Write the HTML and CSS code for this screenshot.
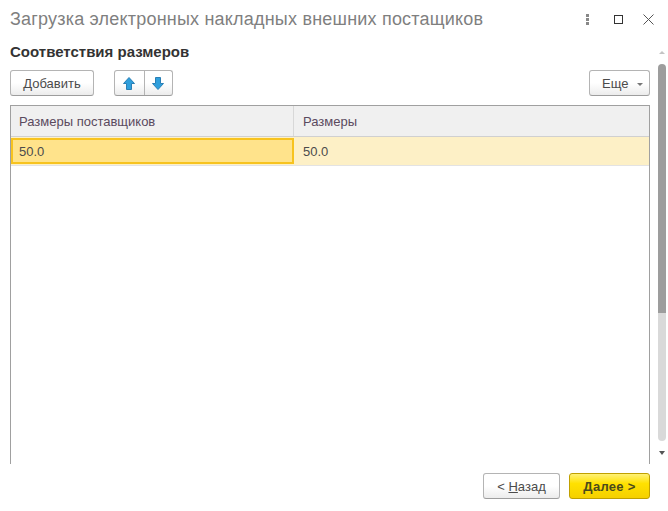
FILE: index.html
```html
<!DOCTYPE html>
<html lang="ru">
<head>
  <meta charset="UTF-8">
  <title>Загрузка электронных накладных внешних постащиков</title>
  <link rel="stylesheet" href="styles.css">
</head>
<body>
<div class="window">
  <div class="titlebar">
    <div class="title">Загрузка электронных накладных внешних постащиков</div>
    <div class="win-btns">
      <svg class="win-menu" width="3" height="11" viewBox="0 0 3 11"><rect width="3" height="3" fill="#888"/><rect y="4" width="3" height="3" fill="#888"/><rect y="8" width="3" height="3" fill="#888"/></svg>
      <svg width="9" height="9" viewBox="0 0 9 9"><rect x="0.5" y="0.5" width="8" height="8" fill="none" stroke="#333"/></svg>
      <svg width="11" height="11" viewBox="0 0 11 11"><path d="M0.5 0.5L10.5 10.5M10.5 0.5L0.5 10.5" stroke="#555" fill="none"/></svg>
    </div>
  </div>

  <div class="main">
    <div class="content">
      <h1 class="form-title">Соответствия размеров</h1>
      <div class="toolbar">
        <button class="btn btn-add">Добавить</button>
        <div class="btn-group">
          <button class="btn-icon">
            <svg width="12" height="13" viewBox="0 0 12 13"><path d="M6 .5L11.5 6.5H8.5V12.5H3.5V6.5H.5Z" fill="#2f9fdc" stroke="#2a7fb5"/></svg>
          </button>
          <button class="btn-icon">
            <svg width="12" height="13" viewBox="0 0 12 13"><path d="M6 12.5L11.5 6.5H8.5V.5H3.5V6.5H.5Z" fill="#2f9fdc" stroke="#2a7fb5"/></svg>
          </button>
        </div>
        <button class="btn btn-more">Еще <span class="caret"></span></button>
      </div>
      <div class="grid">
        <div class="grid-head">
          <div class="cell col-1">Размеры поставщиков</div>
          <div class="cell col-2">Размеры</div>
        </div>
        <div class="grid-row">
          <div class="cell col-1 current">50.0</div>
          <div class="cell col-2">50.0</div>
        </div>
      </div>
    </div>
    <div class="scrollbar">
      <span class="arrow up"></span>
      <div class="thumb"></div>
      <span class="arrow down"></span>
    </div>
  </div>

  <div class="footer">
    <button class="btn btn-back">&lt; <u>Н</u>азад</button>
    <button class="btn btn-next"><u>Д</u>алее &gt;</button>
  </div>
</div>
</body>
</html>
```

FILE: styles.css
```css
* {
  box-sizing: border-box;
}

body {
  margin: 0;
  background: #fff;
  font-family: "Liberation Sans", Arial, sans-serif;
  font-size: 13px;
  color: #4b4b4b;
}

.window {
  width: 668px;
  height: 511px;
  display: flex;
  flex-direction: column;
  overflow: hidden;
}

.titlebar {
  height: 40px;
  flex: none;
  display: flex;
  justify-content: space-between;
  align-items: center;
  padding: 0 14px 1px 10px;
}

.title {
  font-size: 18px;
  letter-spacing: 0.2px;
  color: #7f7f7f;
}

.win-btns {
  display: flex;
  align-items: center;
  gap: 20px;
}

.win-menu {
  margin-right: 5px;
}

.main {
  flex: 1;
  min-height: 0;
  display: flex;
}

.content {
  flex: 1;
  min-width: 0;
  padding: 0 8px 0 10px;
  display: flex;
  flex-direction: column;
}

.form-title {
  margin: 2px 0 9px 0;
  font-size: 15px;
  line-height: 19px;
  font-weight: bold;
  color: #333;
}

.toolbar {
  display: flex;
  align-items: stretch;
  height: 26px;
  margin-bottom: 9px;
}

.btn {
  font-family: inherit;
  font-size: 13px;
  color: #4b4b4b;
  background: linear-gradient(#fff 50%, #ececec);
  border: 1px solid #b4b4b4;
  border-bottom-color: #9d9d9d;
  border-radius: 3px;
  padding: 0;
}

.btn-add {
  width: 84px;
}

.btn-group {
  display: flex;
  margin-left: 20px;
  border: 1px solid #b4b4b4;
  border-bottom-color: #9d9d9d;
  border-radius: 3px;
  background: linear-gradient(#fff 50%, #ececec);
}

.btn-icon {
  width: 29px;
  padding: 0 1px 0 0;
  border: 0;
  background: none;
  display: flex;
  align-items: center;
  justify-content: center;
}

.btn-icon + .btn-icon {
  width: 28px;
  border-left: 1px solid #b4b4b4;
}

.btn-more {
  width: 61px;
  margin-left: auto;
  padding-left: 6px;
}

.caret {
  display: inline-block;
  margin-left: 5px;
  vertical-align: middle;
  border-left: 3px solid transparent;
  border-right: 3px solid transparent;
  border-top: 3px solid #777;
}

.grid {
  flex: 1;
  border: 1px solid #a0a0a0;
  border-bottom: 0;
}

.grid-head,
.grid-row {
  display: flex;
}

.grid-head {
  height: 31px;
  background: #f0f0f0;
  border-bottom: 1px solid #d0d0d0;
  color: #5a4a5e;
}

.grid-row {
  height: 29px;
  background: #fdf0c6;
  border-bottom: 1px solid #e3e3e3;
}

.cell {
  display: flex;
  align-items: center;
  padding-left: 8px;
}

.col-1 {
  width: 283px;
  flex: none;
}

.col-2 {
  flex: 1;
  padding-left: 9px;
}

.grid-head .col-1 {
  border-right: 1px solid #d8d8d8;
}

.current {
  margin: 1px 0;
  background: #ffe38b;
  border: 2px solid #f7c31f;
  padding-left: 6px;
}

.scrollbar {
  width: 10px;
  flex: none;
  display: flex;
  flex-direction: column;
  align-items: center;
  position: relative;
  left: -1px;
}

.thumb {
  width: 8px;
  height: 377px;
  margin-top: 10px;
  background: linear-gradient(#9d9d9d 66%, #d9d9d9 66%);
  border-radius: 4px;
}

.arrow {
  width: 0;
  height: 0;
  border-left: 3px solid transparent;
  border-right: 3px solid transparent;
}

.arrow.up {
  margin-top: 11px;
  border-bottom: 3px solid #c4c4c4;
}

.arrow.down {
  margin-top: 10px;
  border-top: 4px solid #555;
}

.footer {
  height: 47px;
  flex: none;
  display: flex;
  justify-content: flex-end;
  align-items: flex-start;
  gap: 9px;
  padding: 9px 18px 0 0;
}

.footer .btn {
  height: 26px;
}

.btn-back {
  width: 77px;
}

.btn-next {
  width: 81px;
  font-weight: bold;
  letter-spacing: 0.3px;
  color: #4a4a1c;
  background: linear-gradient(#fff176, #ffe100 40%, #f5d000);
  border-color: #c0a000;
}
```
